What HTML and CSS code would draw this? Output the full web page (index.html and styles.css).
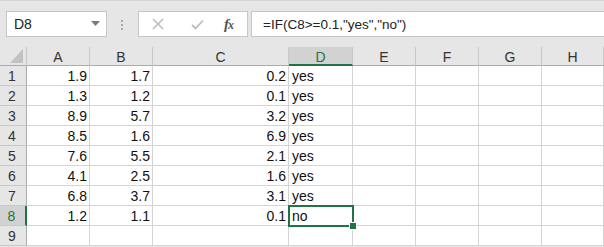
FILE: index.html
```html
<!DOCTYPE html>
<html>
<head>
<meta charset="utf-8">
<link rel="stylesheet" href="styles.css">
</head>
<body>
<div class="app">
  <div class="toolbar">
    <div class="namebox">
      <span class="name">D8</span>
      <svg class="dd" width="9" height="5" viewBox="0 0 9 5"><path d="M0 0H9L4.5 5Z" fill="#7a7a7a"/></svg>
    </div>
    <div class="grip">
      <svg width="3" height="11" viewBox="0 0 3 11"><rect x="0" y="0" width="2" height="2" fill="#a8a8a8"/><rect x="0" y="4" width="2" height="2" fill="#a8a8a8"/><rect x="0" y="8" width="2" height="2" fill="#a8a8a8"/></svg>
    </div>
    <div class="fxbox">
      <svg class="ic" width="12" height="12" viewBox="0 0 12 12"><path d="M1 1L11 11M11 1L1 11" stroke="#bcbcbc" stroke-width="1.6" fill="none"/></svg>
      <svg class="ic" width="13" height="11" viewBox="0 0 13 11"><path d="M1 6L4.5 9.5L12 1.5" stroke="#bcbcbc" stroke-width="1.8" fill="none"/></svg>
      <span class="fx">f<span class="x">x</span></span>
    </div>
    <div class="formula">=IF(C8&gt;=0.1,"yes","no")</div>
  </div>
  <div class="sheet">
    <div class="corner"><svg width="13" height="14" viewBox="0 0 13 14"><path d="M13 0V14H0Z" fill="#c2c2c2"/></svg></div>
    <div class="ch">A</div><div class="ch">B</div><div class="ch">C</div><div class="ch sel">D</div><div class="ch">E</div><div class="ch">F</div><div class="ch">G</div><div class="ch">H</div>

    <div class="rh">1</div><div class="c n">1.9</div><div class="c n">1.7</div><div class="c n">0.2</div><div class="c">yes</div><div class="c"></div><div class="c"></div><div class="c"></div><div class="c"></div>
    <div class="rh">2</div><div class="c n">1.3</div><div class="c n">1.2</div><div class="c n">0.1</div><div class="c">yes</div><div class="c"></div><div class="c"></div><div class="c"></div><div class="c"></div>
    <div class="rh">3</div><div class="c n">8.9</div><div class="c n">5.7</div><div class="c n">3.2</div><div class="c">yes</div><div class="c"></div><div class="c"></div><div class="c"></div><div class="c"></div>
    <div class="rh">4</div><div class="c n">8.5</div><div class="c n">1.6</div><div class="c n">6.9</div><div class="c">yes</div><div class="c"></div><div class="c"></div><div class="c"></div><div class="c"></div>
    <div class="rh">5</div><div class="c n">7.6</div><div class="c n">5.5</div><div class="c n">2.1</div><div class="c">yes</div><div class="c"></div><div class="c"></div><div class="c"></div><div class="c"></div>
    <div class="rh">6</div><div class="c n">4.1</div><div class="c n">2.5</div><div class="c n">1.6</div><div class="c">yes</div><div class="c"></div><div class="c"></div><div class="c"></div><div class="c"></div>
    <div class="rh">7</div><div class="c n">6.8</div><div class="c n">3.7</div><div class="c n">3.1</div><div class="c">yes</div><div class="c"></div><div class="c"></div><div class="c"></div><div class="c"></div>
    <div class="rh sel">8</div><div class="c n">1.2</div><div class="c n">1.1</div><div class="c n">0.1</div><div class="c active">no<span class="handle"></span></div><div class="c"></div><div class="c"></div><div class="c"></div><div class="c"></div>
    <div class="rh">9</div><div class="c"></div><div class="c"></div><div class="c"></div><div class="c"></div><div class="c"></div><div class="c"></div><div class="c"></div><div class="c"></div>
  </div>
</div>
</body>
</html>
```
FILE: styles.css
```css
* { box-sizing: border-box; }
html, body { margin: 0; padding: 0; }
body {
  width: 604px;
  height: 247px;
  overflow: hidden;
  background: #e6e6e6;
  font-family: "Liberation Sans", Arial, sans-serif;
}
.app { border-top: 1px solid #d5d5d5; }
.toolbar {
  display: flex;
  align-items: center;
  height: 46px;
  padding: 10px 0 10px 6px;
}
.namebox {
  width: 101px;
  height: 26px;
  background: #fff;
  border: 1px solid #c6c6c6;
  display: flex;
  align-items: center;
  justify-content: space-between;
  padding: 0 6px 0 7px;
}
.name { font-size: 14px; color: #222; }
.dd { margin-top: -2px; }
.grip {
  width: 31px;
  display: flex;
  justify-content: center;
  padding-top: 2px;
}
.fxbox {
  width: 110px;
  height: 26px;
  background: #fff;
  border: 1px solid #c6c6c6;
  display: flex;
  align-items: center;
  padding-left: 13px;
}
.ic { margin-right: 27px; }
.ic + .ic { margin-right: 20px; }
.fx {
  font-family: "Liberation Serif", "Times New Roman", serif;
  font-style: italic;
  font-weight: bold;
  font-size: 15px;
  color: #555;
  letter-spacing: -1px;
}
.fx .x { font-size: 12px; }
.formula {
  flex: 1;
  margin-left: 3px;
  height: 26px;
  background: #fff;
  border: 1px solid #c6c6c6;
  border-right: none;
  display: flex;
  align-items: center;
  padding-left: 11px;
  font-size: 13.5px;
  color: #222;
}
.sheet {
  display: grid;
  grid-template-columns: 27px 63px 63px 136px 64px 63px 63px 63px 62px;
  grid-template-rows: 19px repeat(9, 20px);
}
.corner {
  border-right: 1px solid #c8c8c8;
  border-bottom: 1px solid #ababab;
  display: flex;
  align-items: flex-end;
  justify-content: flex-end;
  padding: 0 3px 2px 0;
}
.ch {
  border-right: 1px solid #c8c8c8;
  border-bottom: 1px solid #ababab;
  display: flex;
  align-items: center;
  justify-content: center;
  font-size: 14px;
  color: #333;
  padding-top: 2px;
}
.ch.sel {
  background: #d2d2d2;
  border-bottom: 2px solid #217346;
  color: #217346;
}
.rh {
  border-right: 1px solid #ababab;
  border-bottom: 1px solid #c8c8c8;
  display: flex;
  align-items: center;
  justify-content: center;
  font-size: 14px;
  color: #333;
  padding-right: 2px;
}
.rh.sel {
  background: #d2d2d2;
  border-right: 2px solid #217346;
  color: #217346;
}
.c {
  background: #fff;
  border-right: 1px solid #d4d4d4;
  border-bottom: 1px solid #d4d4d4;
  font-size: 14px;
  color: #111;
  display: flex;
  align-items: flex-end;
  padding: 0 2px 1px 3px;
  position: relative;
}
.c.n { justify-content: flex-end; }
.c.active {
  z-index: 2;
  outline: 2px solid #217346;
  outline-offset: -1px;
}
.handle {
  position: absolute;
  right: -4px;
  bottom: -4px;
  width: 6px;
  height: 6px;
  background: #217346;
  box-shadow: 0 0 0 1px #fff;
}
```
